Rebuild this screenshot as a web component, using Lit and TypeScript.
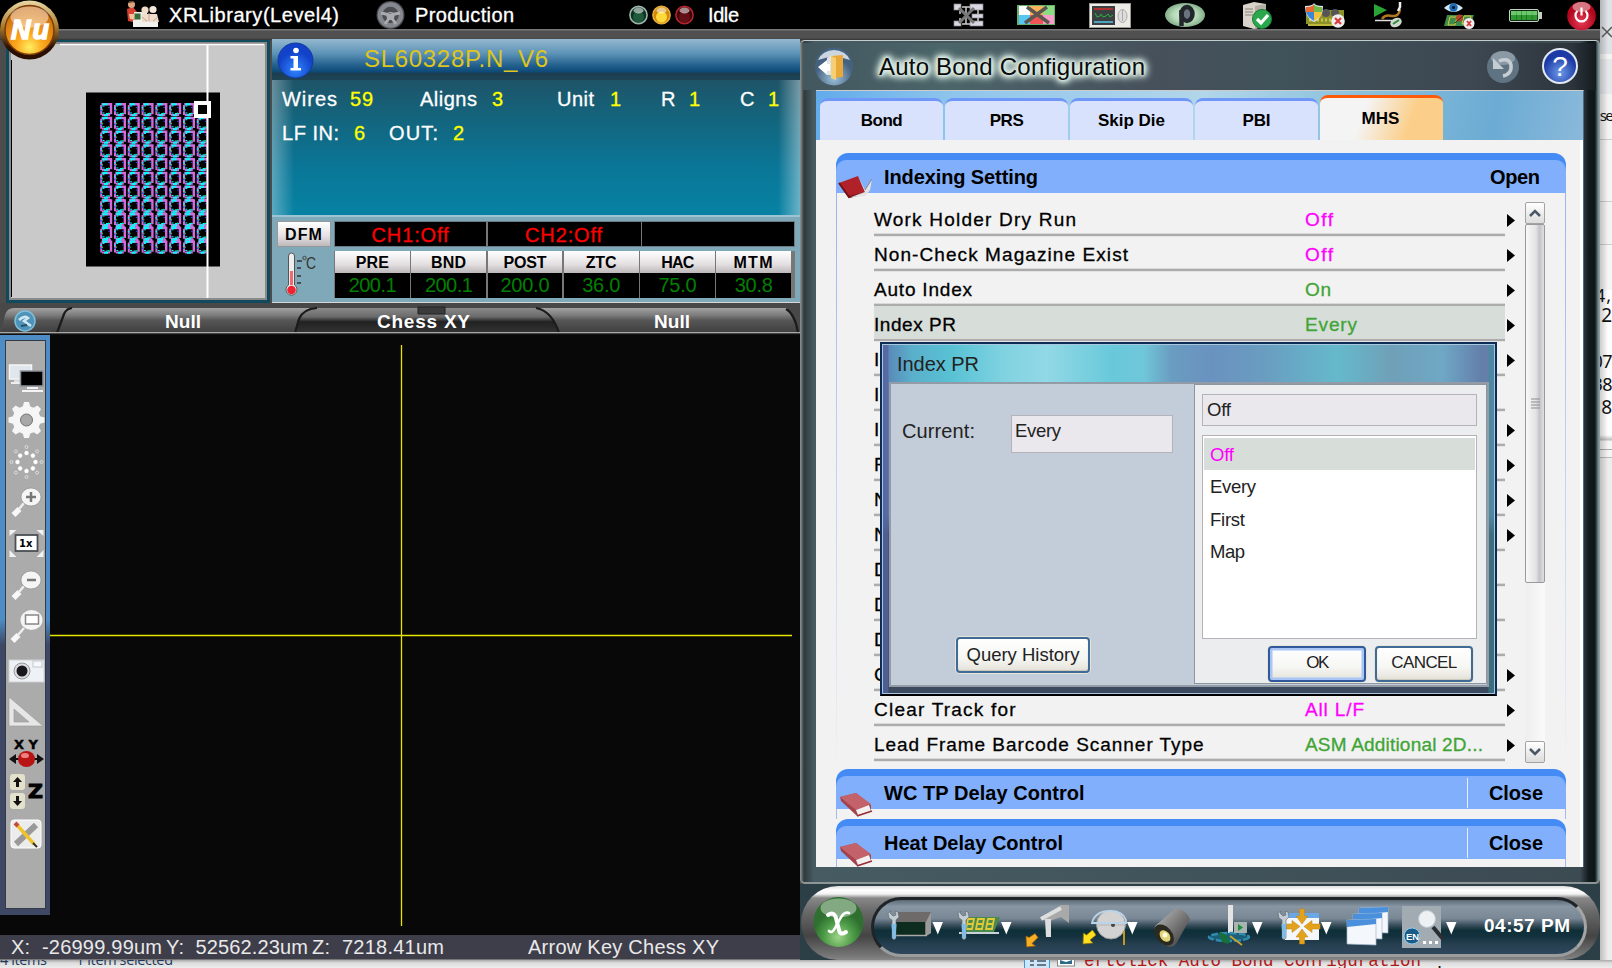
import { LitElement, html, svg, css, nothing } from "lit";
import { customElement } from "lit/decorators.js";

const FAMILY = '"Liberation Sans", Arial, sans-serif';
const ctx = document.createElement("canvas").getContext("2d")!;

/* Text spaced out so that it fills the given width. */
const T = (text: string, w: number, size: number, cls = "", weight = 400, family = FAMILY) => {
  ctx.font = `${weight} ${size}px ${family}`;
  const ls = (w - ctx.measureText(text).width) / Math.max(1, text.length - 1);
  const style = `font-size:${size}px;font-weight:${weight};letter-spacing:${text.length > 1 ? ls.toFixed(3) : 0}px`;
  return html`<span class="t ${cls}" style=${style}>${text}</span>`;
};

/* An icon whose drawing uses the coordinates of the whole window. */
const I = (x: number, y: number, w: number, h: number, body: unknown) =>
  html`<svg class="ic" width=${w} height=${h} viewBox="${x} ${y} ${w} ${h}">${body}</svg>`;

const shared = css`
  * { box-sizing: border-box; }
  .t { display: block; line-height: 1; white-space: pre; font-family: "Liberation Sans", Arial, sans-serif; }
  .ic { display: block; overflow: visible; flex: none; }
  .m { -webkit-text-stroke: 0.3px currentColor; }
`;

const bookClosed = svg`<g><path d="M0 4 16 0 31 12 31 18 17 23 1 8z" fill="#a3434c"/><path d="M0 4 16 0 31 11 16 17z" fill="#c4626b"/><path d="M16 17 29 12 31 18 18 22z" fill="#f4f0f0"/><path d="M17 23 32 18" stroke="#963039" stroke-width="1.5"/></g>`;
const bookOpen = svg`<g><path d="M0 7 19 0 26 16 10 21z" fill="#b0212a"/><path d="M0 7 10 21 26 17" fill="none" stroke="#741118" stroke-width="2"/><path d="M19 0 26 14 33 3 31 14 26 20 12 21 26 16" fill="#e3e3e3"/><path d="M26 14 33 3" stroke="#888"/></g>`;

@customElement("top-bar")
class TopBar extends LitElement {
  static styles = [shared, css`
    :host { display: grid; height: 40px; background: linear-gradient(#000 0 29px, #777 29px 30px, #505050 31px 38px, #333 40px); color: #fff;
      grid-template-columns: 126px 43px 207px 39px 214px 79px 245px 64px 72px 76px 77px 63px 69px 70px 65px 58px 1fr; grid-template-rows: 30px; align-items: center; }
    .t { margin-top: -1px; }
  `];
  render() {
    const light = (x: number, c: string, d: string, ring: string) => svg`<circle cx=${x} cy="14" r="8.6" fill=${d} stroke=${ring} stroke-width="1.6"/><circle cx=${x} cy="16" r="5.5" fill=${c}/><ellipse cx=${x} cy="9.5" rx="5" ry="3" fill="#fff" opacity=".55"/>`;
    return html`<i></i>
      ${I(126, 1, 34, 28, svg`<path d="M127 9l6-2 4 5v11l-9-2z" fill="#d8402f"/><circle cx="131.500" cy="4.500" r="3.500" fill="#dda680"/><path d="M128 3q3-4 7 0l-1-1z" fill="#432"/><path d="M129 14h8l-1 6-6-1z" fill="#f0c4a0"/><path d="M134 12h13v12h-12z" fill="#e9efe6"/><rect x="134.500" y="13.500" width="6" height="6" fill="#3b6a3a"/><path d="M133 20h25v7h-25z" fill="#f4f2ee"/><circle cx="145" cy="10" r="3.600" fill="#f1dccb"/><circle cx="153" cy="9.500" r="3.600" fill="#f3e6da"/><path d="M142 14h15l2 8h-17z" fill="#efdccb"/><path d="M149 13v8M142 17l5 4M158 17l-5 4" stroke="#c7a88e"/>`)}
      ${T("XRLibrary(Level4)", 170, 20, "m")}
      ${I(376, 0, 29, 29, svg`<circle cx="390.500" cy="14" r="14" fill="#4a4c51"/><circle cx="390.500" cy="14" r="10.500" fill="none" stroke="#85888e" stroke-width="4.500"/><circle cx="390.500" cy="15" r="4" fill="#a9abb0"/><path d="M381 12l9 2 10-2M390 16l-5 7M391 16l5 7" stroke="#a9abb0" stroke-width="3"/>`)}
      ${T("Production", 99, 20, "m")}
      ${I(629, 3, 65, 22, svg`${light(638.5, "#1f5a3c", "#0c3322", "#9fb5a8")}${light(661.5, "#ffd93a", "#cf8a06", "#e8ac38")}${light(684.5, "#641017", "#3c0508", "#b2242e")}`)}
      ${T("Idle", 31, 20, "m")}
      ${I(953, 2, 31, 25, svg`<g fill="#d8d8e4" stroke="#888" stroke-width=".7"><rect x="954" y="3" width="7" height="6"/><rect x="970" y="3" width="13" height="6"/><rect x="972" y="13" width="11" height="4"/><rect x="970" y="20" width="13" height="5"/><rect x="954" y="20" width="7" height="5"/></g><path d="M962 6h8M966 6v17M962 23h8M960 10v3M960 17v3M978 9v4M978 17v3" stroke="#ccc" stroke-width="1.500"/><path d="M959 7 974 22M974 7 959 22" stroke="#777" stroke-width="3"/>`)}
      ${I(1017, 4, 38, 20, svg`<rect x="1017" y="4" width="38" height="20" fill="#68b06c"/><rect x="1019" y="5" width="12" height="9" fill="#fff"/><rect x="1030" y="5" width="13" height="9" fill="#fbb35b"/><rect x="1043" y="5" width="11" height="9" fill="#8cdc84"/><rect x="1019" y="14" width="11" height="9" fill="#55c7f2"/><rect x="1030" y="14" width="13" height="9" fill="#f05454"/><rect x="1043" y="14" width="11" height="9" fill="#f79cc8"/><path d="M1027 6 1049 22M1047 6 1025 22" stroke="#5d564e" stroke-width="3.500"/>`)}
      ${I(1089, 2, 42, 25, svg`<rect x="1089.500" y="2.500" width="41" height="24" fill="#ecebe6" stroke="#9a9a92"/><rect x="1092" y="5" width="23" height="19" fill="#3a3f42"/><path d="M1094 8h19" stroke="#d8302c" stroke-width="1.500"/><path d="M1094 21h19" stroke="#59c5e8" stroke-width="1.500"/><path d="M1095 12l2 4 3-1 1-2 2 3 3-1 2-2 2 3 3-2" stroke="#2ab03a" fill="none"/><ellipse cx="1122.500" cy="15" rx="4.500" ry="6.500" fill="#ddd" stroke="#aaa"/><path d="M1122.500 9v11" stroke="#aaa"/>`)}
      ${I(1165, 3, 40, 24, svg`<defs><radialGradient id="ey"><stop offset="0" stop-color="#dff2df"/><stop offset=".6" stop-color="#b5d9b8"/><stop offset="1" stop-color="#84ae8a"/></radialGradient></defs><ellipse cx="1185" cy="15" rx="20" ry="12" fill="url(#ey)"/><ellipse cx="1187" cy="14" rx="5.500" ry="7" fill="#6a7480" stroke="#22272c" stroke-width="4.500"/><path d="M1181.500 10v16" stroke="#22272c" stroke-width="4.500"/>`)}
      ${I(1242, 1, 30, 27, svg`<path d="M1243 4l11-3 12 2v22l-12 3-11-3z" fill="#d9d4cb"/><path d="M1255 5l11-2v22l-11 3z" fill="#b5aea3"/><path d="M1245 8h8M1245 11h8M1245 14h8" stroke="#8a8378"/><circle cx="1262" cy="18" r="9.500" fill="#2ba84d" stroke="#1b7a34"/><path d="M1257 18l4 4 7-8" stroke="#fff" stroke-width="3.200" fill="none"/>`)}
      ${I(1305, 2, 40, 25, svg`<rect x="1306" y="9" width="38" height="14" fill="#8d9228"/><path d="M1308 23v2h28v-2" fill="#c0ba3a"/><path d="M1309 19h30" stroke="#c9c64a" stroke-dasharray="2 2" stroke-width="3"/><circle cx="1326" cy="12" r="4" fill="#555"/><circle cx="1335" cy="12" r="4" fill="#555"/><path d="M1305 5q8 0 9-3 1 3 9 3 0 12-9 16-9-4-9-16" fill="#e5efff"/><path d="M1306 6q7 0 8-3v8h-8z" fill="#e56b34"/><path d="M1314 3q1 3 8 3v5h-8z" fill="#72ba45"/><path d="M1306 11h8v9q-7-4-8-9" fill="#3c86d8"/><path d="M1314 11h8q-1 6-8 9z" fill="#f4c33b"/><circle cx="1338" cy="20" r="6.800" fill="#eee"/><path d="M1335 17l6 6M1341 17l-6 6" stroke="#d83a3a" stroke-width="2.200"/>`)}
      ${I(1374, 0, 29, 26, svg`<path d="M1374 2l13 6-13 7z" fill="#2aa435"/><path d="M1375 18.500h17" stroke="#ddd" stroke-width="1.500"/><path d="M1382 17q3-5 10-3 7 1 8-7" stroke="#b0781c" stroke-width="2.500" fill="none"/><path d="M1400 0v5l-2 4" stroke="#eee" stroke-width="2.500" fill="none"/><ellipse cx="1396" cy="20.500" rx="6" ry="4.500" fill="#cfd8cf" transform="rotate(-25 1396 20.500)"/><path d="M1393 22l6-4" stroke="#2f8a3a" stroke-width="2"/>`)}
      ${I(1444, 1, 31, 27, svg`<path d="M1444 7q9-9 19 0-9 8-19 0" fill="#cfe4f4"/><circle cx="1453.500" cy="6.500" r="4.200" fill="#1c6db5"/><circle cx="1453.500" cy="6.500" r="1.500" fill="#012"/><path d="M1447 14h27l-4 11h-26z" fill="#3d8c4b"/><path d="M1450 16h7l-2 8h-7zM1464 15h7l-2 8h-7z" fill="none" stroke="#dcc63a"/><circle cx="1459.500" cy="17" r="3.500" fill="#b4452b"/><path d="M1455 22l9-8" stroke="#3a2a18"/><circle cx="1469" cy="22.500" r="5.500" fill="#eee"/><path d="M1467 20l4 5M1471 20l-4 5" stroke="#d83a3a" stroke-width="1.800"/>`)}
      ${I(1509, 8, 34, 13, svg`<rect x="1509.500" y="8.500" width="29" height="12" rx="1.500" fill="#0e2a10" stroke="#c4cfc4"/><rect x="1539" y="11" width="3" height="7" fill="#c4cfc4"/>${[0, 1, 2, 3, 4].map(i => svg`<rect x=${1511 + i * 5.3} y="10" width="5" height="9" fill="#2f9a32"/><rect x=${1511 + i * 5.3} y="10" width="5" height="4" fill="#6cc86c"/>`)}`)}
      ${I(1567, 1, 30, 30, svg`<defs><radialGradient id="pw" cy=".7"><stop offset="0" stop-color="#e63a56"/><stop offset="1" stop-color="#b3061d"/></radialGradient></defs><circle cx="1581.500" cy="17" r="14.300" fill="url(#pw)"/><ellipse cx="1581.500" cy="8" rx="9" ry="5" fill="#fff" opacity=".45"/><path d="M1577.500 12a6 6 0 1 0 8 0M1581.500 8.500v8" stroke="#fff" stroke-width="2.200" fill="none"/>`)}`;
  }
}

@customElement("map-panel")
class MapPanel extends LitElement {
  static styles = [shared, css`
    :host { display: block; width: 272px; height: 263px; padding: 0 2px 0 6px; background: #4c4c4c; }
    .edge { height: 263px; padding: 2px 3px 3px 3px; background: #114a5c; }
    .in { height: 258px; border: 2px solid #8a8a8a; border-top-color: #888; background: #c9c9c9; }
  `];
  render() {
    const cells = [];
    for (let r = 0; r < 11; r++) for (let c = 0; c < 8; c++) {
      const x = 100 + c * 13.8, y = 103 + r * 13.75;
      cells.push(svg`<g transform="translate(${x} ${y})">
        <path d="M1.200 2v10" stroke="#d36ad8" stroke-width="2"/><path d="M1.500 1.300h9.500v10" stroke="#d36ad8" stroke-width="2.400" fill="none"/><path d="M2 12h8" stroke="#d36ad8" stroke-width="2"/>
        <path d="M2.500 1.200h5M4 12.200h4" stroke="#0ff" stroke-width="2"/><path d="M2.500 3h2M6 10.500h4M2.500 10h2" stroke="#0ff"/><path d="M1 4v1.500" stroke="#0ff" stroke-width="1.500"/>
        <path d="M2.500 6v1.500M8 10h1" stroke="#00e020"/><path d="M1 7v1.500M9 4v1" stroke="#2050ff" stroke-width="1.500"/>
        ${r > 5 && r < 10 ? svg`<path d="M2 ${16.500 - r * .5}h6v2.500H2z" fill="#19f0f5"/><path d="M8 ${16.500 - r * .5}h3v2.500H8z" fill="#d36ad8"/>` : nothing}</g>`);
    }
    return html`<div class="edge"><div class="in">${I(11, 44, 252, 254, svg`
      <path d="M60 44.500h204" stroke="#fff" stroke-width="1.500"/><path d="M11.500 60v237" stroke="#000"/>
      <rect x="86" y="92.500" width="134" height="174" fill="#000"/>${cells}
      <rect x="208" y="103" width="6" height="152" fill="#000"/><path d="M207.500 44v254" stroke="#fff" stroke-width="2"/><rect x="196" y="103" width="13" height="13" fill="#000" stroke="#fff" stroke-width="4"/>`)}</div></div>`;
  }
}

@customElement("info-panel")
class InfoPanel extends LitElement {
  static styles = [shared, css`
    :host { display: grid; grid-template-rows: 41px 37px 31px 67px 1fr; width: 528px; height: 264px; margin-top: -1px; color: #fff;
      background: linear-gradient(90deg, #ffffff55 0, transparent 22px, transparent 506px, #ffffff66 528px), linear-gradient(#1e5468 41px, #14637b 75px, #0a7798 130px, #0782a3 176px); }
    .head { display: flex; gap: 51px; align-items: center; padding: 0 0 2px 5px; background: linear-gradient(#94b8cf, #5d93b7 35%, #215f8c 65%, #0e4a78 80%, #1b3d50 84%, #1d4456); }
    .name { color: #dfc51c; }
    .r1, .r2 { display: grid; align-items: center; padding: 0 0 0 10px; }
    .r1 { grid-template-columns: 68px 70px 72px 65px 53px 51px 28px 51px 28px 1fr; padding-top: 1px; }
    .r2 { grid-template-columns: 72px 35px 64px 1fr; }
    .y { color: #ff0; }
    .bot { display: grid; grid-template-columns: 57px 1fr; background: #7fa8b8; border-top: 2px solid #9cc4d2; border-bottom: 2px solid #d5d9dc; padding: 4px 5px 4px 5px; row-gap: 4px; grid-template-rows: 26px 47px; }
    .dfm, .h { background: linear-gradient(#fff, #e4e0e1 60%, #bcb7b9); color: #000; display: grid; place-items: center; padding-top: 2px; }
    .dfm { margin-right: 3px; border: 1px solid #999; }
    .chs { display: grid; grid-template-columns: 151px 153px 1fr; gap: 1.5px; background: #777; border: 1.5px solid #6b7b84; }
    .chs div, .v { background: #000; display: grid; place-items: center; }
    .chs div { padding-top: 2px; }
    .v { padding-bottom: 1px; }
    .red { color: #f00; } .g { color: #008000; }
    .grid { display: grid; grid-template-columns: repeat(6, 1fr); grid-template-rows: 22px 25px; column-gap: 1.5px; background: #777; padding: 0 4px 1px 1px; }
  `];
  render() {
    const cols: [string, number, string, number][] = [["PRE", 33, "200.1", 48], ["BND", 35, "200.1", 48], ["POST", 43, "200.0", 49], ["ZTC", 31, "36.0", 38], ["HAC", 33, "75.0", 38], ["MTM", 39, "30.8", 38]];
    return html`
      <div class="head">${I(277, 41, 36, 38, svg`<defs><radialGradient id="inf" cy=".75"><stop offset="0" stop-color="#2f86ff"/><stop offset="1" stop-color="#1242c9"/></radialGradient></defs><circle cx="295.500" cy="61.500" r="17.500" fill="url(#inf)" stroke="#123a9a"/><circle cx="296" cy="51.500" r="2.800" fill="#fff"/><path d="M290.500 57h7.500v12h3v2.500h-10.500v-2.500h3v-9.500h-3z" fill="#fff"/>`)}${T("SL60328P.N_V6", 184, 24, "name")}</div>
      <div class="r1">${T("Wires", 55, 20, "m")}${T("59", 23, 20, "m y")}${T("Aligns", 57, 20, "m")}${T("3", 11, 20, "m y")}${T("Unit", 37, 20, "m")}${T("1", 11, 20, "m y")}${T("R", 14, 20, "m")}${T("1", 11, 20, "m y")}${T("C", 14, 20, "m")}${T("1", 11, 20, "m y")}</div>
      <div class="r2">${T("LF IN:", 57, 20, "m")}${T("6", 11, 20, "m y")}${T("OUT:", 49, 20, "m")}${T("2", 11, 20, "m y")}</div>
      <div></div>
      <div class="bot">
        <div class="dfm">${T("DFM", 37, 16, "", 700)}</div>
        <div class="chs"><div>${T("CH1:Off", 77, 20, "red m")}</div><div>${T("CH2:Off", 77, 20, "red m")}</div><div></div></div>
        ${I(278, 250, 50, 46, svg`<path d="M289.500 255a3 3 0 0 1 6 0v29a5.500 5.500 0 1 1-6 0z" fill="#eee" stroke="#555"/><path d="M291 270h3v14h-3z" fill="#f06a74"/><circle cx="292.500" cy="289" r="4.300" fill="#ee2432"/><path d="M298 260h5M298 267h4M298 275h4M298 282h4" stroke="#333" stroke-width="1.500"/><circle cx="305.500" cy="257" r="1.700" fill="none" stroke="#444"/><text x="307" y="268" font-family="Liberation Sans" font-size="16" textLength="10" lengthAdjust="spacingAndGlyphs" fill="#333">C</text>`)}
        <div class="grid">${cols.map(c => html`<div class="h">${T(c[0], c[1], 16, "", 700)}</div>`)}${cols.map(c => html`<div class="v">${T(c[2], c[3], 20, "g")}</div>`)}</div>
      </div>`;
  }
}

@customElement("camera-view")
class CameraView extends LitElement {
  static styles = [shared, css`
    :host { display: grid; grid-template-rows: 32px 600px 25px; width: 800px; }
    .tabs { display: grid; }
    .tabs > * { grid-area: 1 / 1; }
    .labels { display: grid; grid-template-columns: 165px 212px 277px 1fr; color: #fff; align-items: center; padding-top: 4px; }
    .view { display: flex; background: #080808; }
    .tools { width: 50px; height: 580px; background: linear-gradient(#4d8cc4 0 285px, #3e4763 310px); padding: 5px 4px 6px 5px; }
    .strip { height: 569px; background: #ababab; border: 1px solid #333a48; display: grid; justify-items: start; padding: 23px 0 0 2px;
      grid-template-rows: 37px 44px 43px 41px 42px 39px 47px 39px 42px 36px 45px 32px; }
    .status { display: grid; grid-template-columns: 155px 146px 216px 1fr; padding-left: 11px; align-items: center; background: #3e3d4a; color: #e9e9e9; border-bottom: 1px solid #777; }
  `];
  render() {
    const mag = (y: number, inner: unknown) => svg`<path d="M13.500 ${y + 27}l6-6" stroke="#f8f8f8" stroke-width="5.500"/><path d="M19 ${y + 21}l5-6" stroke="#eee" stroke-width="2.500"/><ellipse cx="31" cy="${y + 9}" rx="10" ry="9" fill="#f5f5f5" stroke="#888" stroke-width=".6"/>${inner}`;
    const gear = Array.from({ length: 8 }, (_, i) => svg`<path d="M21.500 411 24 402h5l2.500 9z" transform="rotate(${i * 45} 26.500 420)" fill="#f6f6f6"/>`);
    const dots = Array.from({ length: 8 }, (_, i) => svg`<g transform="rotate(${i * 45} 26.500 462)"><circle cx="26.500" cy="453" r="2.500" fill="#fff" stroke="#999" stroke-width=".5"/><circle cx="26.500" cy="447" r="1.500" fill="#aaa" stroke="#eee" stroke-width=".7"/></g>`);
    return html`
      <div class="tabs">${I(0, 303, 800, 32, svg`<defs><linearGradient id="tb" x2="0" y2="1"><stop offset="0" stop-color="#a2a2a2"/><stop offset=".3" stop-color="#7a7a7a"/><stop offset=".5" stop-color="#565656"/><stop offset="1" stop-color="#3e3e3e"/></linearGradient><linearGradient id="tc" x2="0" y2="1"><stop offset="0" stop-color="#8a8a8a"/><stop offset=".35" stop-color="#6a6a6a"/><stop offset=".55" stop-color="#222"/><stop offset="1" stop-color="#333"/></linearGradient></defs>
        <rect y="303" width="800" height="32" fill="#484848"/><path d="M1 333l4-18q2-7 9-7h53l-11 25z" fill="url(#tb)"/><path d="M58 333l7-19q2-6 8-6h240l-12 25z" fill="url(#tb)"/><path d="M550 333l-12-25h249l11 22v3z" fill="url(#tb)"/>
        <path d="M294 333l4-14q4-11 16-11h222q14 0 22 25z" fill="url(#tc)"/><path d="M418 307h27v7h-27z" fill="#3b3b3b" stroke="#222"/><path d="M57 333l7-19q2-5 8-6M295 333l4-14q4-10 18-11M786 309q9 5 12 24M536 308q16 3 23 25" stroke="#1b1b1b" stroke-width="2.200" fill="none"/>
        <rect y="332" width="800" height="1.500" fill="#a8a8a8"/><rect y="333.500" width="800" height="2" fill="#111"/><circle cx="25" cy="321" r="10" fill="#4f93b8" stroke="#7cc0dc" stroke-width="1.500"/><path d="M19 320q5-5 9-2l-4 3 7 5" stroke="#cfe6f2" stroke-width="2.500" fill="none"/><path d="M21 326l6-1" stroke="#24506a" stroke-width="2"/>`)}
        <div class="labels"><i></i>${T("Null", 36, 19, "", 700)}${T("Chess XY", 93, 19, "", 700)}${T("Null", 36, 19, "", 700)}</div></div>
      <div class="view">
        <div class="tools"><div class="strip">
          ${I(8, 364, 36, 28, svg`<rect x="9.500" y="365" width="22" height="14" fill="#dfe6ec" stroke="#f6f6f6" stroke-width="1.500"/><path d="M11 383h10" stroke="#eee" stroke-width="2"/><rect x="14" y="380" width="6" height="2" fill="#ddd"/><rect x="20.500" y="371" width="22.500" height="15" fill="#000" stroke="#8d949c" stroke-width="1.500"/><path d="M27 388h11M22 391h21" stroke="#f4f4f4" stroke-width="2"/>`)}
          ${I(8, 401, 36, 38, svg`${gear}<circle cx="26.500" cy="420" r="10" fill="none" stroke="#f6f6f6" stroke-width="8"/><circle cx="26.500" cy="420" r="6" fill="#a8a8a8" stroke="#777"/>`)}
          ${I(8, 445, 36, 34, dots)}
          ${I(8, 488, 36, 31, mag(488, svg`<path d="M26 497h10M31 492v10" stroke="#777" stroke-width="2.500"/>`))}
          ${I(8, 529, 36, 28, svg`<path d="M9.500 536v-6h7zM43.500 536v-6h-7zM9.500 550v7h7zM43.500 550v7h-7z" fill="#f3f3f3"/><rect x="15.500" y="535" width="22" height="16" fill="#fff" stroke="#4a4f54" stroke-width="1.800"/><text x="19" y="547" font-family="DejaVu Sans" font-weight="700" font-size="10">1x</text>`)}
          ${I(8, 571, 36, 31, mag(571, svg`<path d="M27 580h9" stroke="#777" stroke-width="2.500"/>`))}
          ${I(8, 609, 36, 34, svg`<path d="M12.500 640l6-6" stroke="#f8f8f8" stroke-width="5.500"/><path d="M18 634l6-7" stroke="#eee" stroke-width="2.500"/><ellipse cx="31.500" cy="619" rx="11" ry="10" fill="#f5f5f5"/><rect x="25.500" y="614" width="13" height="9" fill="#fff" stroke="#888" stroke-width="1.500"/>`)}
          ${I(8, 657, 36, 26, svg`<rect x="9" y="660" width="35" height="22" fill="#eef1f5" stroke="#d0d0d0"/><rect x="33" y="661" width="9" height="6" fill="#f8f8fa" stroke="#bcc7d0"/><circle cx="22" cy="671" r="8" fill="#ddd" stroke="#999"/><circle cx="22" cy="671" r="5.500" fill="#17171c"/>`)}
          ${I(8, 696, 36, 31, svg`<path d="M9 697v29h34z M14 709l15 13H14z" fill="#e6e6e6" fill-rule="evenodd" stroke="#999" stroke-width=".6"/>`)}
          ${I(8, 738, 36, 30, svg`<text x="14" y="749" font-family="DejaVu Sans" font-weight="700" font-size="13" stroke="#000" stroke-width=".4" textLength="24">XY</text><path d="M9 759l7-5v4h21v-4l7 5-7 5v-4H16v4z" fill="#111"/><ellipse cx="26.500" cy="759" rx="8.500" ry="8" fill="#b81414"/><ellipse cx="25" cy="755.500" rx="4" ry="2.600" fill="#f08080"/>`)}
          ${I(8, 774, 36, 36, svg`<rect x="10" y="774" width="15" height="16" rx="3" fill="#e3e1cb"/><rect x="10" y="793" width="15" height="16" rx="3" fill="#e3e1cb"/><path d="M17.500 777l4.500 5h-3v5h-3v-5h-3zM17.500 806l4.500-5h-3v-5h-3v5h-3z" fill="#111"/><text x="28" y="798" font-family="DejaVu Sans" font-weight="700" font-size="20" stroke="#000" textLength="15" lengthAdjust="spacingAndGlyphs">Z</text>`)}
          ${I(8, 818, 36, 30, svg`<rect x="11" y="819" width="30" height="28" rx="3" fill="#ececec" stroke="#fff"/><path d="M16 843l20-19" stroke="#999" stroke-width="6"/><path d="M17 824l17 19" stroke="#f0c22c" stroke-width="3.500"/><path d="M15 822l3 3" stroke="#c44a3a" stroke-width="4"/><path d="M33 842l4 4" stroke="#332" stroke-width="2"/>`)}
        </div></div>
        ${I(50, 335, 750, 600, svg`<path d="M50 635.500h742M401.500 345v581" stroke="#e5e500" stroke-width="1.300"/>`)}
      </div>
      <div class="status">${T("X:  -26999.99um", 151, 20)}${T("Y:  52562.23um", 142, 20)}${T("Z:  7218.41um", 132, 20)}${T("Arrow Key Chess XY", 191, 20)}</div>`;
  }
}

@customElement("index-dialog")
class IndexDialog extends LitElement {
  static styles = [shared, css`
    :host { display: block; width: 617px; height: 354px; color: #222; border: 2px solid #0d2c55; border-bottom-color: #000;
      background: linear-gradient(90deg, #5a7fb2 0, #5aafcb 30px, #58c2d4 70px, #82d3e2 125px, #92d8e6 165px, #68c9da 230px, #6fc6d9 262px, #6a9cc0 290px, #6a92c0 330px, #6a9cc0 380px, #65b9cb 455px, #6fa0b8 510px, #6fa8c5 560px, #637faa 600px); }
    .frame { height: 350px; padding: 0 5px 7px 6px; border: 1px solid #a8c6dd; background: linear-gradient(90deg, #5562a0cc 0 5px, transparent 6px calc(100% - 6px), #3b8f9b88 calc(100% - 5px)), linear-gradient(transparent 170px, #3b4a5e 190px); display: grid; grid-template-rows: 37px 1fr; }
    .title { display: flex; align-items: center; padding-left: 8px; }
    .body { border: 2px solid #929ba6; background: #c2cdd9; display: grid; grid-template-columns: 303px 1fr; }
    .left { display: grid; grid-template-columns: 109px 162px; grid-template-rows: 95px 1fr 49px; padding-left: 11px; align-items: center; }
    .field { background: #eae8ed; border: 1.5px solid #b5b3b8; height: 38px; padding: 6px 0 0 3px; align-self: start; margin-top: 31px; }
    .cur { margin-top: -1px; }
    .q { grid-column: 1 / 3; grid-row: 3; width: 134px; height: 36px; margin-left: 54px; align-self: start; margin-top: 1px; }
    .btn { display: grid; place-items: center; border: 2px solid #3f6b96; border-radius: 4px; background: linear-gradient(#fff, #f6f6f3 60%, #e4e2d9); box-shadow: 0 0 0 1px #e6e6d8, inset 0 -1px 1px #c9c6ba; }
    .ok { border-color: #31589a; box-shadow: 0 0 0 1px #e6e6d8, inset 0 0 0 2.5px #a9c5f5; }
    .right { background: #ebedef; border: 1.5px solid #8d959e; margin-bottom: 1px; display: grid; grid-template-rows: 32px 204px 35px; row-gap: 9px; padding: 9px 9px 0 7px; }
    .pick { background: #eae8ed; border: 1.5px solid #b5b3b8; display: flex; align-items: center; padding-left: 4px; }
    .list { background: #fff; border: 1.5px solid #b5b3b8; padding: 2px 1px; display: grid; grid-template-rows: 32px 33px 32px 32px; }
    .list > div { display: flex; align-items: center; padding: 2px 0 0 6px; }
    .list > .sel { color: #f0f; background: #d7ddd9; }
    .bs { display: grid; grid-template-columns: 98px 98px; gap: 9px; justify-content: end; padding-right: 4px; margin-top: -2px; margin-bottom: 1px; }
    .bs .t { margin-top: -3px; }
  `];
  render() {
    return html`<div class="frame"><div class="title">${T("Index PR", 82, 20)}</div>
      <div class="body"><div class="left"><div class="cur">${T("Current:", 73, 20)}</div><div class="field">${T("Every", 46, 18.5)}</div>
        <div class="btn q">${T("Query History", 113, 18.5)}</div></div>
        <div class="right"><div class="pick">${T("Off", 24, 18.5)}</div>
          <div class="list"><div class="sel">${T("Off", 24, 18.5)}</div><div>${T("Every", 46, 18.5)}</div><div>${T("First", 35, 18.5)}</div><div>${T("Map", 35, 18.5)}</div></div>
          <div class="bs"><div class="btn ok">${T("OK", 23, 17)}</div><div class="btn">${T("CANCEL", 66, 17)}</div></div></div></div></div>`;
  }
}

@customElement("config-window")
class ConfigWindow extends LitElement {
  static styles = [shared, css`
    :host { display: block; width: 800px; height: 844px; padding: 2px 4px 4px 3px; position: relative;
      background: linear-gradient(90deg, #8f9798, #303a3e 4px, #465c62 14px, #3c4a52 780px, #10191c 789px, #0f1818 795px, #8aa1a6 799px); border-top: 1.5px solid #c3cdcf; border-radius: 5px; border-bottom: 2px solid #8e9698; }
    .bar { display: grid; grid-template-columns: 64px 608px 54px 40px; height: 47px; align-items: center; padding-left: 12px; background: linear-gradient(90deg, #43575f, #4b6569 18%, #46505b 45%, #40525a 60%, #3d4751 85%, #2c353c 97%, #151c20); }
    .glow { text-shadow: 0 0 2px #dcece4, 0 0 3px #dcece4, 0 0 4px #dcece4, 0 0 5px #dcece4, 0 0 6px #dcece4, 0 0 7px #dcece4, 0 0 8px #dcece4, 0 0 9px #cfe3d9, 0 0 10px #cfe3d9, 0 0 11px #cfe3d9; color: #0a0a0a; }
    .body { height: 777px; margin: 0 9px 0 13px; width: 768px; background: #f2f2f2; border-top: 1px solid #ccc; border-right: 1.5px solid #4f6b80; overflow: hidden; box-shadow: inset -3px 0 #fff; display: grid; grid-template-rows: 49px 1fr; }
    .tabs { display: grid; grid-template-columns: repeat(5, 123px); column-gap: 2px; padding-left: 4px; align-items: end; background: linear-gradient(100deg, #62abeb, #8fc5ec 18%, #b2d6ea 50%, #8fc3de 68%, #6cabd4 88%, #8ab9da); }
    .tab { height: 42px; border-radius: 8px 8px 0 0; border-top: 3px solid #6f97f7; background: #d9e2fc; display: grid; place-items: center; padding-bottom: 1px;}
    .on { height: 45px; border-top-color: #ff5a0a; background: linear-gradient(110deg, #f4f4f4 35%, #fbcf8a 72%); padding: 0 2px 2px 0; }
    .page { padding: 13px 18px 0 20px; display: grid; grid-template-rows: 616px 50px 50px; }
    .head { height: 40px; border-radius: 12px 12px 0 0; background: #448bf5; padding-top: 7px; }
    .inner { height: 33px; border-radius: 10px 10px 0 0; background: #82affb; display: grid; grid-template-columns: 48px 583px 99px; align-items: center; }
    .inner .bk { align-self: end; margin: 0 0 -7px 4px; }
    .open .bk { margin: 0 0 -6px 3px; }
    .st { padding-left: 23px; }
    .cl { padding-left: 21px; border-left: 1.5px solid #e6eeff; height: 30px; display: flex; align-items: center; }
    .side { width: 730px; height: 576px; border: 1px solid; border-width: 0 1px; border-image: linear-gradient(#9db2f0, #d6ddf6 70%, #f2f2f2) 1; display: grid; grid-template-columns: 651px 20px; padding: 8px 0 0 37px; }
    .short { height: 10px; border: 1px solid #a6b8f0; border-width: 0 1px; }
    .row { display: grid; grid-template-columns: 631px 20px; height: 35px; }
    .cells { display: grid; grid-template-columns: 431px 1fr; align-items: center; border-bottom: 2px solid #acacac; box-shadow: inset 0 -1px #d9d9d9, 0 1px #e4e4e4; padding-top: 3px; }
    .hl { background: #d7ddd9; }
    .row .ic { align-self: center; margin-top: 2px; }
    .mg { color: #f0f; } .gr { color: #3fa535; }
    .scroll { height: 561px; margin-top: 1px; background: linear-gradient(90deg, #eee, #fafafa); display: grid; grid-template-rows: 22px 359px 158px 22px; }
    .sb { border: 1.5px solid #a3a3a3; border-radius: 2px; background: linear-gradient(#fff, #ddd); display: grid; place-items: center; }
    .th { border: 1.5px solid #9a9a9a; border-radius: 2px; background: linear-gradient(90deg, #f8f8f8, #e3e3e5 55%, #c4c4c8 75%, #e0e0e0); display: grid; place-items: center; }
    index-dialog { position: absolute; left: 80px; top: 301px; }
  `];
  rows: [string, number, string, number, boolean][] = [
    ["Work Holder Dry Run", 202, "Off", 28, true], ["Non-Check Magazine Exist", 254, "Off", 28, true], ["Auto Index", 98, "On", 26, true], ["Index PR", 82, "Every", 52, true],
    ["I", 0, "", 0, true], ["I", 0, "", 0, false], ["I", 0, "", 0, true], ["F", 0, "", 0, true], ["N", 0, "", 0, true], ["N", 0, "", 0, true],
    ["D", 0, "", 0, false], ["D", 0, "", 0, false], ["D", 0, "", 0, false], ["C", 0, "", 0, true],
    ["Clear Track for", 142, "All L/F", 59, true], ["Lead Frame Barcode Scanner Type", 330, "ASM Additional 2D...", 179, true]];
  render() {
    const tabs: [string, number][] = [["Bond", 42], ["PRS", 34], ["Skip Die", 67], ["PBI", 28], ["MHS", 38]];
    const head = (t: string, w: number, s: string, sw: number, open: boolean) => html`<div class="head"><div class="inner ${open ? "open" : ""}"><svg class="ic bk" width="34" height="23">${open ? bookOpen : bookClosed}</svg>${T(t, w, 20, "", 700)}<div class=${open ? "st" : "cl"}>${T(s, sw, 20, "", 700)}</div></div></div>`;
    return html`
      <div class="bar">
        ${I(815, 49, 39, 39, svg`<defs><radialGradient id="dr" cy=".8"><stop offset="0" stop-color="#9fc4dd"/><stop offset="1" stop-color="#44617f"/></radialGradient></defs><circle cx="834" cy="68.500" r="19" fill="url(#dr)"/><path d="M818 62a17 15 0 0 1 32 0q-16-6-32 0" fill="#e3ebf0" opacity=".85"/><path d="M827 60l6-3v20h-6z" fill="#dfe6ea"/><path d="M831 58l12-1v22l-12 1z" fill="#e8a93a"/><path d="M831 58l5 2v22l-5-2z" fill="#f6cf75"/><path d="M818 69l9-7v4h3v7h-3v4z" fill="#fff"/>`)}
        ${T("Auto Bond Configuration", 266, 24, "glow")}
        ${I(1487, 49, 33, 33, svg`<circle cx="1503" cy="66" r="16" fill="#5f7382"/><ellipse cx="1503" cy="57" rx="12" ry="7" fill="#a6b2bb" opacity=".6"/><path d="M1499 60q10-4 12 4 1 9-8 11" stroke="#c6cdd2" stroke-width="3.500" fill="none"/><path d="M1493 57v11h11z" fill="#c6cdd2"/>`)}
        ${I(1541, 48, 37, 37, svg`<defs><radialGradient id="hp" cy=".7"><stop offset="0" stop-color="#6f9bea"/><stop offset="1" stop-color="#1c3ba6"/></radialGradient></defs><circle cx="1560" cy="66" r="17" fill="url(#hp)" stroke="#e4e8f2" stroke-width="2"/><text x="1560" y="76" text-anchor="middle" font-family="Liberation Sans" font-size="28" fill="#fff">?</text>`)}
      </div>
      <div class="body">
        <div class="tabs">${tabs.map((t, i) => html`<div class="tab ${i === 4 ? "on" : ""}">${T(t[0], t[1], 17, "", 700)}</div>`)}</div>
        <div class="page">
          <div>${head("Indexing Setting", 154, "Open", 50, true)}
            <div class="side"><div>${this.rows.map((r, i) => html`<div class="row"><div class="cells ${i === 3 ? "hl" : ""}">${T(r[0], r[1], 19, "m")}${r[2] ? T(r[2], r[3], 19, "m " + (r[2] === "Off" || r[2][1] === "l" ? "mg" : "gr")) : nothing}</div>
              ${r[4] ? html`<svg class="ic" width="12" height="16"><path d="M2 2v13l8-6.500z"/></svg>` : nothing}</div>`)}</div>
              <div class="scroll"><div class="sb"><svg width="12" height="8"><path d="M1 7l5-5 5 5" stroke="#4c5868" stroke-width="2.500" fill="none"/></svg></div>
                <div class="th"><svg width="9" height="11"><path d="M0 1h9M0 4h9M0 7h9M0 10h9" stroke="#8d8d8d"/></svg></div><i></i>
                <div class="sb"><svg width="12" height="8"><path d="M1 1l5 5 5-5" stroke="#4c5868" stroke-width="2.500" fill="none"/></svg></div></div></div></div>
          <div>${head("WC TP Delay Control", 201, "Close", 54, false)}<div class="short"></div></div>
          <div>${head("Heat Delay Control", 179, "Close", 54, false)}<div class="short"></div></div>
        </div>
      </div>
      <index-dialog></index-dialog>`;
  }
}

@customElement("task-bar")
class TaskBar extends LitElement {
  static styles = [shared, css`
    :host { display: block; width: 800px; height: 76px; background: #2c3e46; padding: 2px 0 0 1px; }
    .pill { height: 74px; border-radius: 38px 37px 37px 38px; background: linear-gradient(#ddd, #fff 4px, #f2f2f2 8px, #888 12px, #6a6a6a 25px, #444 50px, #777 70px, #888); display: grid; grid-template-columns: 70px 716px; align-items: center; }
    .dock { height: 60px; margin-top: 8px; border-radius: 30px; border: 3px solid #1e2428; border-bottom-color: #9a9c9e; border-right-color: #a5a5a5; background: linear-gradient(#5d6a76, #8896a4 12%, #7a8896 34%, #3c515e 46%, #0e2e38 56%, #12313d 66%, #263f50 82%, #2f475c);
      display: grid; grid-template-columns: 69px 68px 57px 70px 55px 70px 68px 56px 82px 1fr; padding-left: 15px; padding-bottom: 2px; align-items: center; color: #fff; }
    .ball { margin-left: 12px; margin-top: -1px; }
    .dock .t { margin-top: -1px; }
  `];
  render() {
    const ar = (x: number) => svg`<path d="M${x} 922h10.500l-5.200 12.500z" fill="#fff"/>`;
    const wrench = (x: number) => svg`<path d="M${x} 913l1 5 3 2v18q2 3 4 0v-18l3-3-1-5-3-1 1 4-3 1-3-3 1-2z" fill="#c3ccd2" stroke="#58636b" stroke-width=".6"/><path d="M${x + 3.5} 924h5l-1 14q-1.500 2-3 0z" fill="#7fbde6"/>`;
    return html`<div class="pill">
      <div class="ball">${I(813, 897, 51, 51, svg`<defs><radialGradient id="gx" cy=".8"><stop offset="0" stop-color="#9ed488"/><stop offset=".6" stop-color="#4b9a46"/><stop offset="1" stop-color="#2f7030"/></radialGradient></defs><circle cx="838.500" cy="922" r="25" fill="url(#gx)"/><ellipse cx="838.500" cy="908" rx="18" ry="9.500" fill="#fff" opacity=".4"/><path d="M828 915q6-4 8 3l3 12q1 6 7 2" stroke="#fff" stroke-width="4" fill="none" stroke-linecap="round"/><path d="M849 913q-5-2-9 6l-5 9q-3 6-6 3" stroke="#fff" stroke-width="2.600" fill="none" stroke-linecap="round"/>`)}</div>
      <div class="dock">
        ${I(890, 905, 55, 42, svg`<path d="M897 912h35v21l-5 3h-29z" fill="#777"/><path d="M897 922h29v13h-29z" fill="#0d2b1e"/><path d="M897 912h35l-5 10h-30z" fill="#6f6a6a"/><path d="M927 922l5-10v21l-5 3z" fill="#9a9a9a"/><path d="M897 935.500h31" stroke="#aaa" stroke-width="1.500"/>${wrench(889)}${ar(933.5)}`)}
        ${I(959, 905, 55, 42, svg`<path d="M965 917h36l-6 15h-32z" fill="#4a8a4f"/><g fill="none" stroke="#e2c936" stroke-width="1.800"><path d="M969 919h6l-2 10h-6zM968 924h6M979 919h6l-2 10h-6zM978 924h6M989 919h6l-2 10h-6zM988 924h6"/></g><path d="M960 933h40" stroke="#c9d2d6" stroke-width="2"/>${wrench(959)}${ar(1002)}`)}
        ${I(1027, 905, 44, 42, svg`<path d="M1042 918l20-13h8v18l-8-6-14 5z" fill="#a9a9a9"/><path d="M1042 919l20-11" stroke="#dedede" stroke-width="4"/><path d="M1046 919h6v18h-5z" fill="#ddd"/><path d="M1027.500 947l-.5-11 3 1.500 6-4 3 4-6 6 3.500 2.500z" fill="#f8ae22" stroke="#8f5a08" stroke-width=".7"/>`)}
        ${I(1083, 905, 56, 42, svg`<circle cx="1111" cy="924.500" r="14.500" fill="#d2d2d2" stroke="#999"/><path d="M1098 925h27" stroke="#b4b4b4"/><circle cx="1113" cy="925" r="2" fill="#444"/><path d="M1092 923q3-12 18-12 13 0 16 9v3z" fill="none" stroke="#b9d3e8" stroke-width="1.800"/><path d="M1124 931v14" stroke="#c8961c" stroke-width="2"/><path d="M1083 944l.5-11 3 2 6-5 3.500 5-6 5 3 3z" fill="#ffdf1e" stroke="#8b7408" stroke-width=".7"/>${ar(1127)}`)}
        ${I(1153, 905, 38, 42, svg`<defs><linearGradient id="lt" x2="1" y2="1"><stop offset=".2" stop-color="#a5a5a5"/><stop offset=".6" stop-color="#6a6a6a"/><stop offset="1" stop-color="#333"/></linearGradient></defs><path d="M1155 926l21-18q10 2 14 11l-14 25q-3 4-9 2-14-6-12-20" fill="url(#lt)"/><ellipse cx="1164" cy="935" rx="12" ry="8" transform="rotate(50 1164 935)" fill="#2b2a20"/><ellipse cx="1165" cy="936" rx="6.500" ry="4.500" transform="rotate(50 1165 936)" fill="#e0d37a"/><circle cx="1165" cy="935" r="2.500" fill="#fffbd5"/>`)}
        ${I(1208, 905, 55, 42, svg`<path d="M1228 905h5v29h-5z" fill="#e4e4e4"/><ellipse cx="1229" cy="937" rx="20" ry="4" fill="#1b5f7a" stroke="#2f8cae" stroke-width="2.500" stroke-dasharray="7 2"/><path d="M1219 932l6 2 5 7-2 3-6-2z" fill="#15703a"/><path d="M1230 936l12 9" stroke="#c8a22a" stroke-width="1.800"/><rect x="1234" y="922" width="13" height="11" fill="#a9b4b2"/><path d="M1238 924v7l5-3.500z" fill="#1f8f3a"/>${ar(1252)}`)}
        ${I(1277, 905, 55, 42, svg`<rect x="1284" y="913" width="34" height="27" fill="#f4f7fa"/><rect x="1284" y="913" width="34" height="5" fill="#6ba6e6"/><g fill="#e3a21c" stroke="#c08412" stroke-width=".5"><path d="M1298.500 909h5v7h3.500l-6 8-6-8h3.500zM1298.500 944h5v-7h3.500l-6-8-6 8h3.500zM1285 924h6v-3.500l8 6-8 6v-3.500h-6zM1319 924h-8v-3.500l-8 6 8 6v-3.500h8z"/></g>${wrench(1277)}${ar(1320)}`)}
        ${I(1345, 905, 43, 42, svg`${[[1358, 907], [1352, 913], [1346, 919]].map(([x, y]) => svg`<path d="M${x} ${y + 1}l29-1v26l-29-1z" fill="#f4f8fc" stroke="#9fb7cb" stroke-width=".7"/><path d="M${x} ${y + 1}l29-1v5l-29 3z" fill="#4a90dd"/>`)}`)}
        ${I(1402, 905, 56, 43, svg`<rect x="1402" y="906" width="39" height="42" fill="#a2abb2"/><circle cx="1427" cy="919" r="8.500" fill="#edf1f4" stroke="#bdc6cd"/><path d="M1433 927l10 12" stroke="#2a2e33" stroke-width="4"/><circle cx="1412" cy="936" r="8" fill="#1b5b86" stroke="#8ccdf0"/><text x="1406" y="940" font-family="Liberation Sans" font-weight="700" font-size="9.500" fill="#fff">EN</text><path d="M1423 942.500h17" stroke="#fff" stroke-width="3" stroke-dasharray="3 3"/>${ar(1446)}`)}
        <div>${T("04:57 PM", 86, 19, "", 700)}</div>
      </div></div>`;
  }
}

@customElement("app-root")
class AppRoot extends LitElement {
  static styles = [shared, css`
    :host { display: grid; grid-template-columns: 1600px 12px; grid-template-rows: 960px 8px; width: 1612px; height: 968px; overflow: hidden; background: #ececec; position: relative; }
    .app { display: grid; grid-template-rows: 40px 920px; background: #4c4c4c; overflow: hidden; }
    .cols { display: grid; grid-template-columns: 800px 800px; }
    .row { display: flex; height: 263px; }
    .nu { position: absolute; left: 0; top: 1px; }
    .strip { overflow: hidden; background: linear-gradient(90deg, #0003, transparent 8px), linear-gradient(#dfe2e6 54px, #f4f4f4 54px 59px, #e6e8eb 59px 94px, #f3f3f3 94px 139px, #ccc 139px 140px, #f5f5f5 140px 201px, #ccc 201px 202px, #f3f3f3 202px 244px, #ccc 244px 245px, #f6f6f6 245px 290px, #fff 290px 435px, #bbb 440px, #f5f5f5 441px 449px, #aaa 449px 450px, #f5f5f5 450px 457px, #bbb 457px 458px, #ededed 458px);
      display: grid; grid-template-columns: 12px; grid-template-rows: 108px 178px 20px 46px 23px 23px 1fr; color: #111; }
    .strip > * { justify-self: end; font-family: "Noto Sans", sans-serif; }
    .x { margin-top: 24px; }
    .bottom { grid-column: 1 / 3; overflow: hidden; display: grid; grid-template-columns: 76px 948px 33px 27px 353px 1fr; height: 8px; background: linear-gradient(#a9a9a9, #dedede 3px, #ececec); color: #1e395b; }
    .bottom .t { margin-top: -7px; }
    .bottom .items { font-family: "Open Sans", sans-serif; margin-top: -7px; }
    .bottom .code { color: #b01818; font-family: "Liberation Mono", monospace; margin-top: -7px; }
    .blk { color: #111; }
  `];
  render() {
    return html`
      <div class="app"><top-bar></top-bar>
        <div class="cols"><div><div class="row"><map-panel></map-panel><info-panel></info-panel></div><camera-view></camera-view></div>
          <div><config-window></config-window><task-bar></task-bar></div></div></div>
      <div class="strip"><svg class="x" width="11" height="16"><path d="M1 3l10 10M11 3L1 13" stroke="#555" stroke-width="1.500"/></svg>
        ${T("se", 14, 15, "", 400, '"Noto Sans"')}${T("4,", 16, 18, "", 400, '"Noto Sans"')}${T("2", 9, 19)}${T("07", 20, 18, "", 400, '"Noto Sans"')}${T("38", 20, 18, "", 400, '"Noto Sans"')}${T("8", 9, 19)}</div>
      <div class="bottom">${T("4 items", 47, 14.5, "items", 400, '"Open Sans"')}${T("1 item selected", 97, 14.5, "items", 400, '"Open Sans"')}<svg class="ic" width="26" height="8"><rect x=".5" y="-2" width="25" height="12" fill="#cfe6f8" stroke="#3c97d8"/><path d="M6 1h4M6 5h4M13 1h9M13 5h9" stroke="#456" stroke-width="1.500"/></svg><svg class="ic" width="18" height="8"><rect x=".5" y="-2" width="17" height="8" fill="#fff" stroke="#888"/><path d="M3 4V0l6 2 6-2v4z" fill="#2e6a86"/></svg>${T("ertClick Auto Bond Configuration", 337, 17.5, "code", 400, '"Liberation Mono"')}${T(",", 8, 18, "blk")}</div>
      <div class="nu">${I(0, 1, 60, 60, svg`<defs><radialGradient id="nu" cy=".85" r=".8"><stop offset="0" stop-color="#ffee62"/><stop offset=".35" stop-color="#fba61c"/><stop offset="1" stop-color="#c8660a"/></radialGradient><linearGradient id="nr" x2="0" y2="1"><stop offset="0" stop-color="#ecd9a4"/><stop offset=".45" stop-color="#a87a2c"/><stop offset=".8" stop-color="#2a0f02"/></linearGradient></defs><circle cx="29.500" cy="30" r="29.500" fill="url(#nr)"/><circle cx="29.500" cy="30" r="24.500" fill="url(#nu)" stroke="#7a3c08" stroke-width="1.500"/><ellipse cx="29.500" cy="17" rx="19" ry="10.500" fill="#fff" opacity=".45"/><text x="11" y="39" font-family="Liberation Sans" font-weight="700" font-style="italic" font-size="27" fill="#fff" stroke="#fff" stroke-width="1.500" textLength="38">Nu</text>`)}</div>`;
  }
}
